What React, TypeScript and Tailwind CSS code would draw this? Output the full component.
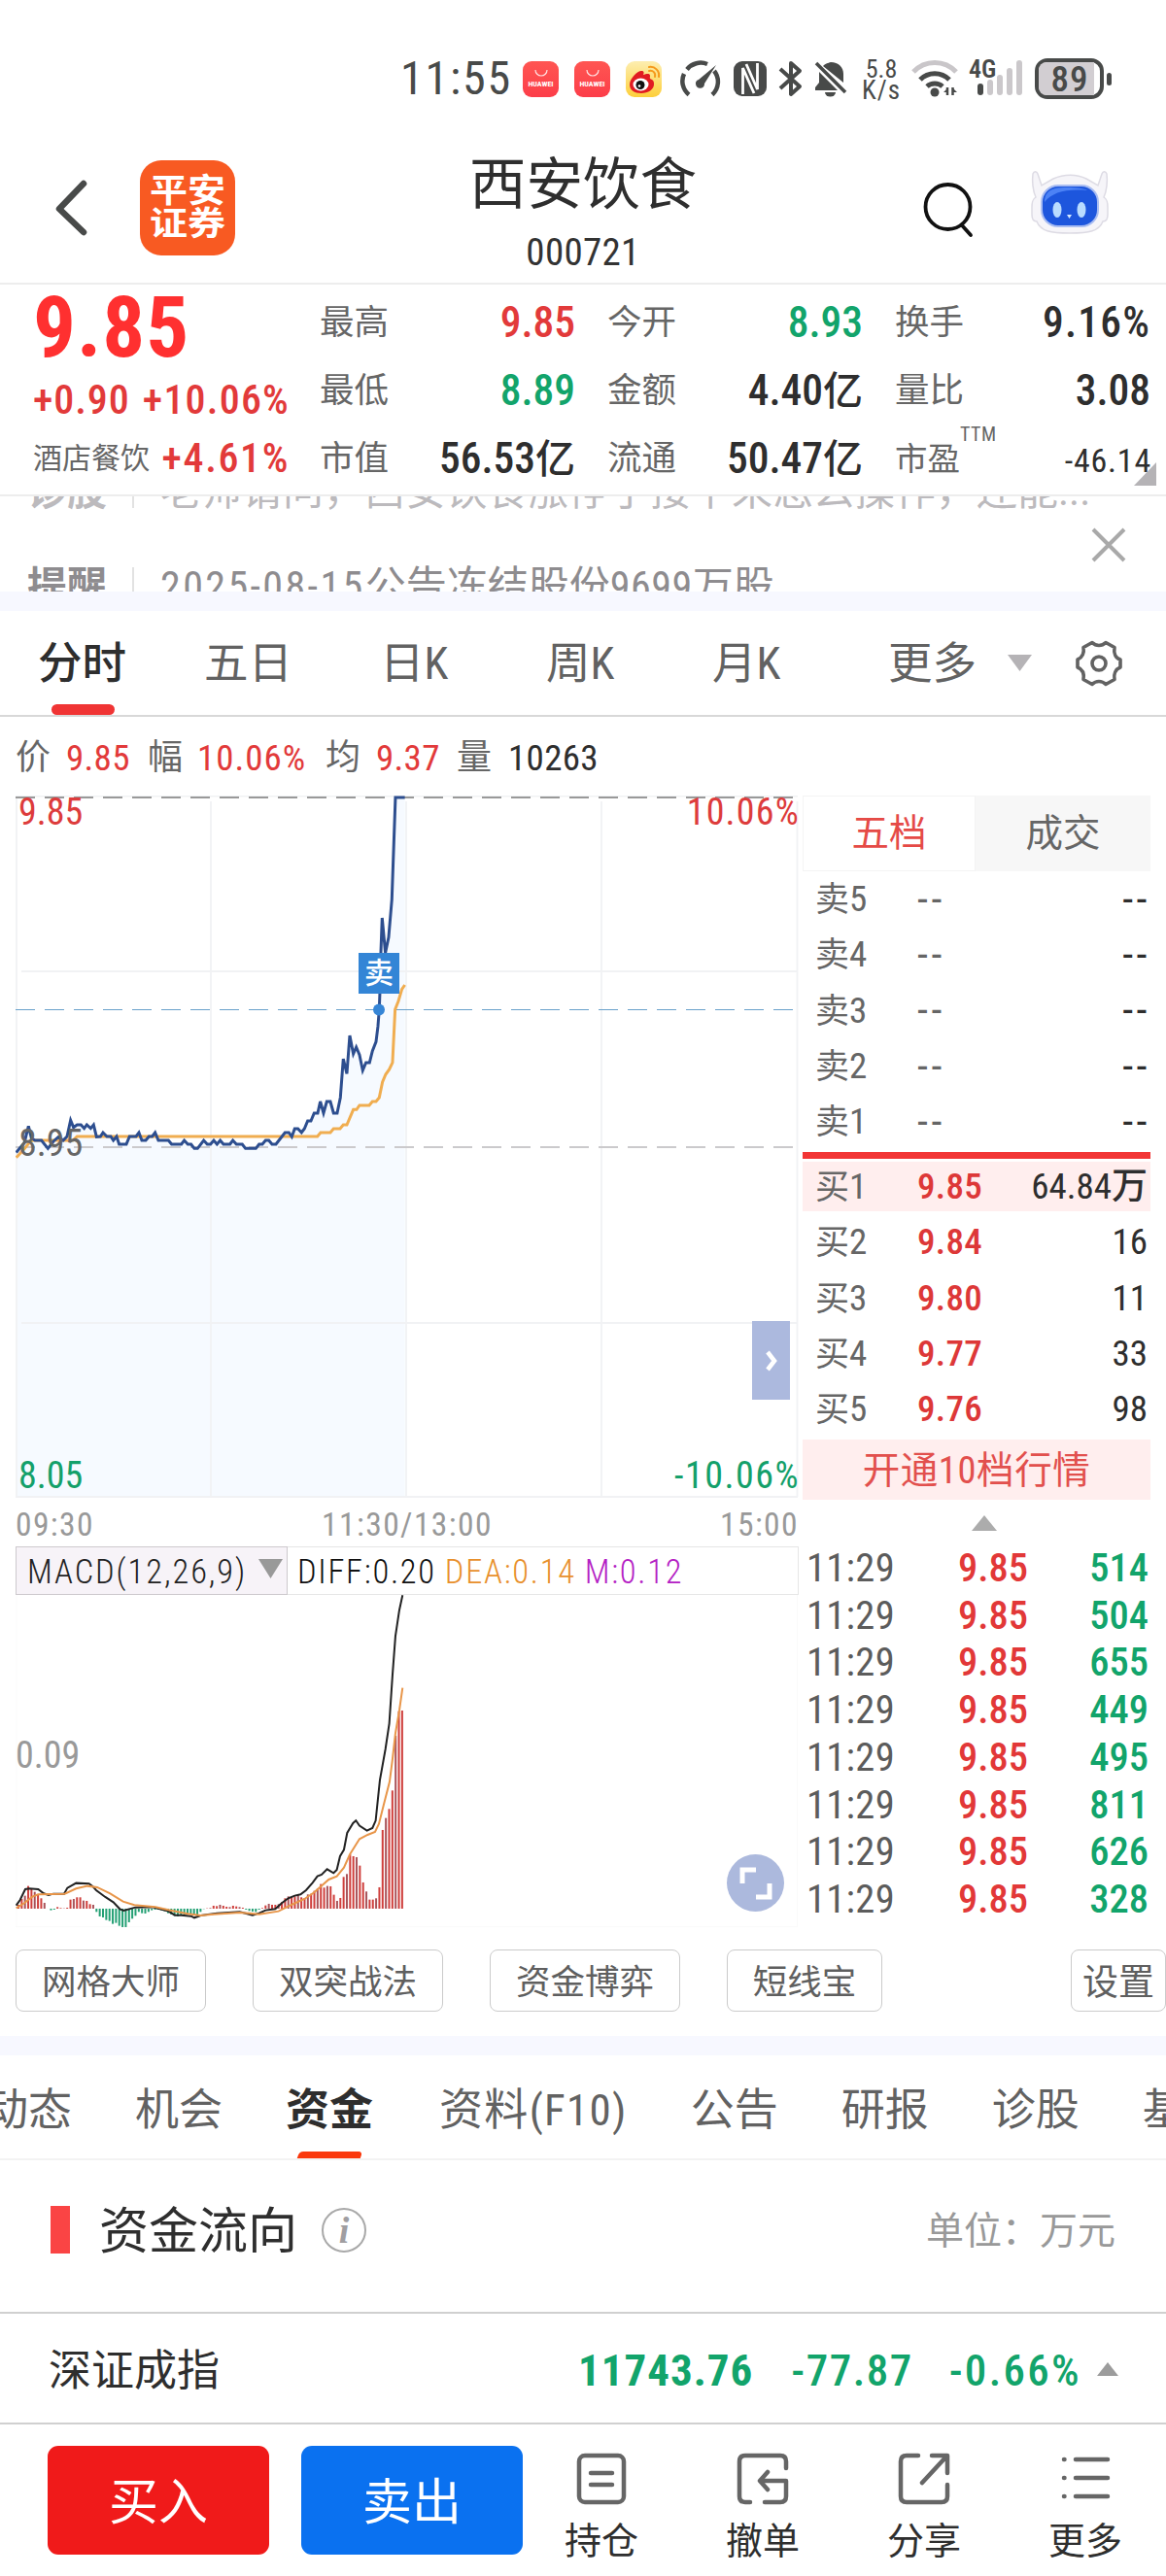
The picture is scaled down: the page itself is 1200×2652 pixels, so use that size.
import React from 'react';
import clsx from 'clsx';

const PRICE_LINE =
    '50,560 62,545 75,530 88,478 97,515 108,522 128,522 148,547 165,525 180,512 195,522 207,510 218,460 227,482 238,474 250,474 260,485 268,474 280,485 289,474 298,511 310,510 318,498 330,510 342,510 350,522 360,510 368,534 390,534 400,510 420,510 429,498 438,522 450,522 460,510 470,510 479,498 489,522 520,522 530,534 560,534 569,522 580,534 590,534 600,547 610,547 629,522 640,534 650,534 660,522 670,534 680,522 690,534 710,534 719,522 730,534 748,534 758,547 790,547 800,534 810,534 820,522 830,522 840,534 852,534 880,498 892,498 901,511 910,486 920,486 931,498 940,486 950,462 960,462 970,438 981,438 989,402 999,438 1009,402 1020,402 1030,438 1041,438 1051,390 1060,270 1071,316 1080,198 1091,255 1100,234 1110,258 1120,306 1130,282 1141,282 1150,246 1161,218 1167,170 1171,118 1173,66 1176,-57 1180,-165 1190,-57 1200,-105 1210,-222 1221,-537 1250,-537';

const AVG_LINE =
    '50,575 55,570 75,548 90,530 100,522 225,522 238,510 980,510 990,498 1020,498 1030,486 1050,486 1060,474 1071,474 1091,427 1101,427 1110,414 1140,414 1150,402 1161,402 1171,390 1181,342 1191,318 1202,303 1212,282 1220,118 1230,92 1241,55 1250,42';

const DIFF_LINE =
    '50,1022 62,1005 78,972 90,970 118,972 135,985 150,990 165,986 198,986 208,968 235,953 275,955 285,962 297,975 325,996 350,1012 370,1033 382,1038 418,1028 470,1027 520,1040 540,1052 560,1052 590,1055 600,1060 620,1053 670,1046 740,1042 780,1052 800,1046 820,1037 850,1033 870,1015 890,1000 910,992 928,988 945,975 965,952 980,932 993,927 1010,910 1030,922 1040,912 1050,870 1062,850 1072,798 1090,768 1099,760 1110,776 1133,791 1150,783 1160,760 1173,635 1190,540 1202,460 1212,310 1221,190 1233,110 1243,64';

const DEA_LINE =
    '50,1030 75,1015 100,995 118,988 200,986 235,970 270,962 300,966 340,985 380,1010 415,1021 480,1027 530,1038 580,1048 620,1053 660,1049 740,1044 800,1049 860,1040 900,1020 940,1002 970,982 1015,942 1040,932 1062,905 1080,865 1110,817 1135,804 1158,795 1170,770 1185,710 1203,640 1212,570 1221,490 1233,420 1243,350';

const MACD_BARS = [
    12, 30, 40, 70, 60, 52, 42, 32, 18, 0, -5, -3, 5, 2, 1, 3, 28, 30, 35, 35, 25, 24, 14, 12, -10, -24, -27, -35, -38, -47,
    -44, -53, -57, -57, -42, -31, -22, -10, -14, -15, -10, -5, -3, -3, -5, -8, -14, -18, -22, -24, -20, -18, -16, -16, -19,
    -20, -10, -1, 1, 2, 9, 8, 12, 9, 6, 5, 9, 7, 5, 3, -3, -7, -9, -10, -3, 2, 10, 15, 12, 12, 14, 20, 32, 38, 36, 38, 42,
    35, 32, 44, 46, 55, 62, 76, 65, 70, 69, 43, 24, 33, 98, 107, 168, 162, 159, 133, 81, 53, 28, 28, 32, 66, 243, 280, 308,
    365, 534, 610, 612,
];

const asks = ['卖5', '卖4', '卖3', '卖2', '卖1'];

const bids = [
    { label: '买1', price: '9.85', qty: '64.84万' },
    { label: '买2', price: '9.84', qty: '16' },
    { label: '买3', price: '9.80', qty: '11' },
    { label: '买4', price: '9.77', qty: '33' },
    { label: '买5', price: '9.76', qty: '98' },
];

const ticks = ['514', '504', '655', '449', '495', '811', '626', '328'];

const HuaweiIcon = () => (
    <div className="flex h-[37px] w-[37px] flex-col items-center justify-center rounded-[9px] bg-gradient-to-b from-[#ff5552] to-[#fc3d49]">
        <svg width="14" height="9" viewBox="0 0 14 9" fill="none" stroke="#ffe3e3" strokeWidth="1.2">
            <path d="M1 1a6 6 0 0 0 12 0" />
        </svg>
        <span className="mt-[2px] text-[8px] leading-[9px] font-bold text-white">HUAWEI</span>
    </div>
);

const StatusBar = () => (
    <div className="flex h-[140px] shrink-0 items-start pt-[60px] pl-[412px] text-[#484a49]">
        <div className="flex h-[42px] items-center">
            <span className="w-[126px] text-[48px] leading-none tracking-[1.800px]">11:55</span>
            <HuaweiIcon />
            <div className="ml-4">
                <HuaweiIcon />
            </div>
            <svg className="ml-4" width="37" height="37" viewBox="0 0 37 37">
                <defs>
                    <linearGradient id="wb" x1="0" y1="0" x2="0" y2="1">
                        <stop offset="0" stopColor="#fdeeb0" />
                        <stop offset="1" stopColor="#fdcf3a" />
                    </linearGradient>
                </defs>
                <rect width="37" height="37" rx="9" fill="url(#wb)" />
                <path d="M4 24c0-6 8-14 12-14 3 0 3 2 2 4 3-1 7-2 7 1 0 2-1 3 2 4 2 1 2 3 2 5 0 5-6 9-13 9S4 30 4 24z" fill="#e11b22" />
                <ellipse cx="15.500" cy="24" rx="8" ry="6.500" fill="#fff" />
                <circle cx="15" cy="24.500" r="4.500" fill="#111" />
                <circle cx="14" cy="25.500" r="1.300" fill="#fff" />
                <path d="M24 10c4-1 7 2 6 6M24 6c6-1 11 4 10 10" fill="none" stroke="#f59a1b" strokeWidth="2" strokeLinecap="round" />
            </svg>
            <svg className="ml-[18px]" width="44" height="38" viewBox="0 0 44 38" fill="none" stroke="currentColor" strokeWidth="4.500">
                <path d="M10 35.500A18 18 0 0 1 5 14M8 9.500A18 18 0 0 1 29 4M36 11a18 18 0 0 1-2 24.500" />
                <path d="M38 5 26 24a4.500 4.500 0 1 1-6-4z" fill="currentColor" stroke="none" />
            </svg>
            <svg className="ml-[12px]" width="35" height="36" viewBox="0 0 35 36">
                <rect width="34" height="36" rx="9" fill="currentColor" />
                <path d="M9.500 34V7L21 33M24.500 2v27L13 3" fill="none" stroke="#fff" strokeWidth="2.800" />
            </svg>
            <svg className="ml-[11px]" width="26" height="38" viewBox="0 0 26 38" fill="none" stroke="currentColor" strokeWidth="4" strokeLinejoin="round">
                <path d="m2 9 20 18-9 8V3l9 8L2 29" />
            </svg>
            <svg className="ml-[11px]" width="34" height="38" viewBox="0 0 34 38" fill="currentColor">
                <path d="M5 12 24 31H1v-3l4-5zM9 6c3-3 5-3 8-4 8 0 13 5 13 12v9z" />
                <path d="m2 3 30 30" stroke="currentColor" strokeWidth="3.500" />
                <path d="M11 33h11a5.500 4.500 0 0 1-11 0z" />
            </svg>
        </div>
        <div className="ml-[15px] flex w-[40px] flex-col items-center text-[26px] leading-[22px] font-[450]">
            <span>5.8</span>
            <span className="text-[27px] tracking-[1px]">K/s</span>
        </div>
        <svg className="ml-[11px]" width="48" height="42" viewBox="0 0 48 42" fill="none" strokeWidth="5">
            <path d="M2 14a30 30 0 0 1 44 0" stroke="#c9c6c9" />
            <path d="M9 22a21 21 0 0 1 30 0M16 29a12 12 0 0 1 16 0" stroke="currentColor" />
            <circle cx="24" cy="35" r="4.500" fill="currentColor" />
            <path d="m38 30-5 5h5zm4 0 5 5h-5z" fill="currentColor" />
            <path d="M37 30v8M42.500 30v8" stroke="currentColor" strokeWidth="2.500" />
        </svg>
        <div className="relative ml-[11px] h-[42px] w-[58px]">
            <svg width="58" height="42" viewBox="0 0 58 42" fill="none" strokeWidth="6" strokeLinecap="round">
                <path d="M12 29v6" stroke="#484a49" />
                <path d="M22 25v10M32 20v15M42 13v22M52 5v30" stroke="#cbc8cb" />
            </svg>
            <span className="absolute top-0 left-0 text-[26px] leading-[22px] font-semibold">4G</span>
        </div>
        <div className="ml-[10px] flex items-center gap-[3px]">
            <div className="flex h-[42px] w-[71px] items-center rounded-[13px] border-4 border-[#484a49]">
                <div className="flex h-full w-[57px] items-center justify-center rounded-l-[8px] bg-[#d2ced2] pl-[7px] text-[37px] leading-none font-medium tracking-[1px]">89</div>
            </div>
            <div className="h-[13px] w-[5px] rounded-full bg-[#484a49]" />
        </div>
    </div>
);

const Header = () => (
    <div className="relative flex h-[153px] shrink-0 items-start justify-between border-b-2 border-[#ededed]">
        <div className="flex items-center pt-[25px] pl-[56px]">
            <svg width="36" height="60" viewBox="0 0 36 60" fill="none" stroke="#484a49" strokeWidth="6.500" strokeLinecap="round" strokeLinejoin="round">
                <path d="M30 5 5 31l25 24" />
            </svg>
            <div className="ml-[52px] flex h-[98px] w-[98px] flex-col items-center justify-center rounded-[22px] bg-[#f85a22] text-[39px] leading-[34px] font-bold text-white">
                <span className="scale-y-[0.86]">平安</span>
                <span className="scale-y-[0.86]">证券</span>
            </div>
        </div>
        <div className="absolute inset-x-0 top-[14px] flex flex-col items-center text-[#2e2e2e]">
            <span className="text-[58.500px] leading-[72px]">西安饮食</span>
            <span className="mt-[13px] text-[39px] leading-[42px] tracking-[0.300px] text-[#333]">000721</span>
        </div>
        <div className="flex items-start pt-[34px] pr-[58px]">
            <svg className="mt-[13px]" width="54" height="58" viewBox="0 0 54 58" fill="none" stroke="#111" strokeWidth="3.800" strokeLinecap="round">
                <circle cx="26.500" cy="26" r="23" />
                <path d="m41 45 9 10" />
            </svg>
            <svg className="ml-[57px]" width="82" height="68" viewBox="0 0 82 68">
                <path d="M3 5c1-3 4-3 5 0l4 12 12-7c11-5 24-5 34 0l12 7 4-12c1-3 4-3 5 0 1 7 0 18-3 24 3 2 4 4 4 10v8c0 5-2 7-5 7-4 10-14 12-34 12S11 64 7 54c-3 0-5-2-5-7v-8c0-6 1-8 4-10C3 23 2 12 3 5z" fill="#f6f5f9" stroke="#dddbe4" strokeWidth="1.500" />
                <rect x="12" y="17" width="58" height="42" rx="17" fill="#1d56dd" stroke="#a9bdf2" strokeWidth="2" />
                <path d="M26 20c-8 2-11 7-11 14 8-10 22-14 44-12-4-3-24-4-33-2z" fill="#4c82f5" />
                <ellipse cx="28" cy="42" rx="4.500" ry="8" fill="#b9dcff" />
                <ellipse cx="53" cy="42" rx="4.500" ry="8" fill="#b9dcff" />
                <path d="M38 47h5l-2.500 4z" fill="#d8ebff" />
            </svg>
        </div>
    </div>
);

interface StatProps {
    label: string;
    value: string;
    unit?: string;
    tone?: string;
}

const Stat: React.FC<StatProps> = ({ label, value, unit, tone = 'text-[#2e2e2e]' }) => (
    <div className="flex h-[70px] items-center justify-between">
        <span className="text-[35.500px] text-[#666]">{label}</span>
        <span className={clsx('text-[43.500px] font-medium', value.endsWith('%') && 'tracking-[1.200px]', tone)}>
            {value}
            {unit && <span className="text-[41px]">{unit}</span>}
        </span>
    </div>
);

const Quote = () => (
    <div className="relative flex h-[218px] shrink-0 border-b-2 border-[#ededed] pt-[5px] pl-[34px] leading-none">
        <div className="w-[295px] text-[#e23a3a]">
            <div className="flex h-[78px] items-center text-[87px] font-bold tracking-[1px] text-[#ff3030]">9.85</div>
            <div className="mt-[3px] flex h-[66px] w-[263px] items-center justify-between text-[42px] font-medium">
                <span className="tracking-[0.900px]">+0.90</span>
                <span className="-mr-px tracking-[1.200px]">+10.06%</span>
            </div>
            <div className="flex h-[54px] w-[263px] items-center justify-between text-[42px] font-medium">
                <span className="text-[30px] font-normal text-[#666]">酒店餐饮</span>
                <span className="-mr-px tracking-[1.600px]">+4.61%</span>
            </div>
        </div>
        <div className="w-[263px]">
            <Stat label="最高" value="9.85" tone="text-[#e23a3a]" />
            <Stat label="最低" value="8.89" tone="text-[#12a46b]" />
            <Stat label="市值" value="56.53" unit="亿" />
        </div>
        <div className="ml-[33px] w-[263px]">
            <Stat label="今开" value="8.93" tone="text-[#12a46b]" />
            <Stat label="金额" value="4.40" unit="亿" />
            <Stat label="流通" value="50.47" unit="亿" />
        </div>
        <div className="ml-[33px] w-[263px]">
            <Stat label="换手" value="9.16%" />
            <Stat label="量比" value="3.08" />
            <div className="flex h-[70px] items-center">
                <span className="text-[33.500px] text-[#666]">市盈</span>
                <span className="mb-[52px] text-[20px] tracking-[0.500px] text-[#666]">TTM</span>
                <span className="-mr-px ml-auto pt-[2px] text-[34px] font-[450] tracking-[0.800px] text-[#2e2e2e]">-46.14</span>
            </div>
        </div>
        <svg className="absolute right-[10px] bottom-[9px]" width="23" height="24" viewBox="0 0 23 24">
            <path d="M23 0v24H0z" fill="#b5b3b6" />
        </svg>
    </div>
);

const Notice = () => (
    <div className="relative h-[98px] shrink-0 overflow-hidden text-[42px] leading-[60px]">
        <div className="-mt-[35px] flex items-center text-[#bcbabd]">
            <span className="w-[136px] shrink-0 pl-[28px] text-[41px] font-bold">诊股</span>
            <div className="mr-[27px] h-[34px] w-[2px] shrink-0 bg-[#e2e2e2]" />
            <span>老师请问，西安饮食涨停了接下来怎么操作，还能...</span>
        </div>
        <div className="mt-[38px] flex items-center text-[#8e8c8f]">
            <span className="w-[136px] shrink-0 pl-[28px] text-[41px] font-bold">提醒</span>
            <div className="mr-[27px] h-[40px] w-[2px] shrink-0 bg-[#e2e2e2]" />
            <span className="tracking-[2.400px]">2025-08-15</span>
            <span>公告冻结股份</span>
            <span className="tracking-[0.500px]">9699</span>
            <span>万股</span>
        </div>
        <svg className="absolute top-[32px] right-[41px]" width="36" height="36" viewBox="0 0 36 36" stroke="#a9a9a9" strokeWidth="4">
            <path d="m2 2 32 32M34 2 2 34" />
        </svg>
    </div>
);

const ChartTabs = () => (
    <div className="flex h-[109px] shrink-0 items-center border-b-2 border-[#d8d8d8] pl-[39px] text-[45.500px] leading-none text-[#626262]">
        <div className="relative flex h-full w-[171px] items-center pt-[2px] font-medium text-[#2e2e2e]">
            分时
            <div className="absolute bottom-0 left-[14px] h-[11px] w-[65px] rounded-full bg-[#f03434]" />
        </div>
        <span className="w-[181px] pt-[2px]">五日</span>
        <span className="w-[171px] pt-[2px]">日K</span>
        <span className="w-[171px] pt-[2px]">周K</span>
        <span className="w-[181px] pt-[2px]">月K</span>
        <span className="w-[123px] pt-[2px]">更多</span>
        <svg width="25" height="17" viewBox="0 0 25 17">
            <path d="M0 0h25L12.500 17z" fill="#b5b3b6" />
        </svg>
        <svg className="ml-[45px]" width="48" height="48" viewBox="0 0 48 48" fill="none" stroke="#626262" strokeWidth="3.600" strokeLinejoin="round">
            <path d="M17 2.500c4 4 10 4 14 0l9 5c-1 6 1 11 6 12.500v8c-5 2-7 7-6 12.500l-9 5c-4-4-10-4-14 0l-9-5c1-6-1-10.500-6-12.500v-8c5-2 7-7 6-12.500z" />
            <circle cx="24" cy="24" r="7" />
        </svg>
    </div>
);

const PriceChart = () => (
    <div className="relative h-[723px] w-[806px] text-[38px] leading-[38px] font-[450]">
        <svg className="absolute inset-0" width="806" height="723" viewBox="16 819 806 723" fill="none">
            <polygon points={`${PRICE_LINE} 1250,1623 50,1623`} transform="translate(0 1000) scale(0.3333)" fill="#f6faff" />
            <path d="M17 819v722M217 825v716M418 825v716M619 825v716M820.500 825v716M16 819.500h805M22 1000h799M22 1362h799M16 1541h805" stroke="#f1f2f4" strokeWidth="1.800" />
            <path d="M16 821h801" stroke="#999" strokeWidth="2" strokeDasharray="20 10" />
            <path d="M16 1039.500h801" stroke="#69a1cb" strokeWidth="1.200" strokeDasharray="20 10" />
            <path d="M16 1181h801" stroke="#cbcacc" strokeWidth="2" strokeDasharray="20 10" />
            <g transform="translate(0 1000) scale(0.3333)" strokeWidth="9">
                <polyline points={AVG_LINE} stroke="#f0ad50" />
                <polyline points={PRICE_LINE} stroke="#2d4e8f" />
            </g>
            <circle cx="390" cy="1039.500" r="6" fill="#3585d6" />
        </svg>
        <span className="absolute top-[-2px] left-[3px] text-[#dd3c3c]">9.85</span>
        <span className="absolute top-[-2px] -right-px tracking-[1.200px] text-[#dd3c3c]">10.06%</span>
        <span className="absolute top-[339px] left-[3px] font-normal text-[#666]">8.95</span>
        <span className="absolute bottom-[4px] left-[3px] text-[#14a06a]">8.05</span>
        <span className="absolute -right-px bottom-[4px] tracking-[1.500px] text-[#14a06a]">-10.06%</span>
        <div className="absolute top-[162px] left-[353px] flex h-[42px] w-[42px] items-center justify-center bg-[#3385d6] text-[30px] font-medium text-white">卖</div>
        <div className="absolute top-[541px] left-[758px] flex h-[81px] w-[39px] items-center justify-center bg-[#acb9de]">
            <svg width="14" height="22" viewBox="0 0 14 22" fill="none" stroke="#fff" strokeWidth="4.500">
                <path d="m3 2 7 9-7 9" />
            </svg>
        </div>
    </div>
);

const MacdChart = () => (
    <div className="relative h-[342px] w-[806px]">
        <svg width="806" height="342" viewBox="16 1641 806 342" fill="none">
            <path d="M17 1641v341M16 1982.500h805M820.500 1641v341" stroke="#fafafa" />
            <g transform="translate(0 1620) scale(0.3333)">
                {MACD_BARS.map((v, i) => (
                    <rect
                        key={i}
                        x={54 + i * 10.04}
                        y={v > 0 ? 1032 - v : 1032}
                        width="6"
                        height={Math.abs(v)}
                        fill={v < 0 ? '#24a074' : i % 3 === 2 ? '#a9545a' : '#cf3f3c'}
                    />
                ))}
                <polyline points={DIFF_LINE} stroke="#222" strokeWidth="6" />
                <polyline points={DEA_LINE} stroke="#e8964a" strokeWidth="6" />
            </g>
        </svg>
        <span className="absolute top-[146px] left-0 text-[38px] leading-[38px] text-[#999]">0.09</span>
        <div className="absolute top-[267px] left-[732px] flex h-[59px] w-[59px] items-center justify-center rounded-full bg-[#acb9dd]">
            <svg width="34" height="34" viewBox="0 0 34 34" fill="none" stroke="#fff" strokeWidth="5">
                <path d="M3 17V3h14M31 17v14H17" />
            </svg>
        </div>
    </div>
);

const OrderBook = () => (
    <div className="w-[358px] text-[37px] leading-none">
        <div className="flex h-[78px] text-[38.500px]">
            <div className="flex w-[178px] items-center justify-center border border-[#f4f4f4] text-[#e54a46]">五档</div>
            <div className="flex flex-1 items-center justify-center bg-[#f7f7f7] text-[#666]">成交</div>
        </div>
        <div className="h-[289px]">
            {asks.map((label) => (
                <div key={label} className="flex h-[57.300px] items-center pr-[3px] pl-[13px] text-[#666]">
                    <span className="w-[105px] text-[37px]">
                        <span className="text-[35px]">{label[0]}</span>
                        {label[1]}
                    </span>
                    <span className="text-[44px] tracking-[3.500px]">--</span>
                    <span className="ml-auto -mr-[3px] text-[44px] font-[450] tracking-[3.500px] text-[#2e2e2e]">--</span>
                </div>
            ))}
        </div>
        <div className="h-[7px] bg-[#f23535]" />
        <div className="h-[289px]">
            {bids.map(({ label, price, qty }, i) => (
                <div key={label} className="flex h-[57.300px] items-center">
                    <div className={clsx('flex h-[51px] w-full items-center pr-[3px] pl-[13px]', i === 0 && 'bg-[#ffeeee]')}>
                        <span className="w-[105px] text-[37px] text-[#666]">
                            <span className="text-[35px]">{label[0]}</span>
                            {label[1]}
                        </span>
                        <span className="font-medium tracking-[0.300px] text-[#dd3838]">{price}</span>
                        <span className="ml-auto font-[450] text-[#2e2e2e]">{qty}</span>
                    </div>
                </div>
            ))}
        </div>
        <div className="flex h-[62px] items-center justify-center bg-[#ffeeee] pt-[2px] text-[38.500px] tracking-[0.600px] text-[#e2504d]">开通10档行情</div>
        <svg className="mt-[16px] ml-[174px]" width="26" height="16" viewBox="0 0 26 16">
            <path d="M13 0 26 16H0z" fill="#acacac" />
        </svg>
        <div className="mt-[14px] text-[40.500px]">
            {ticks.map((vol) => (
                <div key={vol} className="flex h-[48.700px] items-center pr-[2px] pl-[4px] font-medium">
                    <span className="w-[156px] font-normal tracking-[0.300px] text-[#5c5c5c]">11:29</span>
                    <span className="text-[#e23838]">9.85</span>
                    <span className="ml-auto text-[#12a46b]">{vol}</span>
                </div>
            ))}
        </div>
    </div>
);

const Chip: React.FC<{ children: React.ReactNode; className: string }> = ({ children, className }) => (
    <div className={clsx('flex h-[64px] shrink-0 items-center justify-center rounded-[8px] border-[1.500px] border-[#cbcbcb] pt-[5px]', className)}>{children}</div>
);

const ChartSection = () => (
    <>
        <div className="flex h-[81px] shrink-0 items-center pt-[3px] pl-[16px] text-[37px] leading-none text-[#666]">
            <span className="w-[52px] text-[36px]">价</span>
            <span className="w-[84px] font-[450] tracking-[0.300px] text-[#e23a3a]">9.85</span>
            <span className="w-[51px] text-[36px]">幅</span>
            <span className="w-[132px] font-[450] tracking-[1px] text-[#e23a3a]">10.06%</span>
            <span className="w-[52px] text-[36px]">均</span>
            <span className="w-[83px] font-[450] tracking-[0.300px] text-[#e23a3a]">9.37</span>
            <span className="w-[53px] text-[36px]">量</span>
            <span className="tracking-[0.300px] text-[#2e2e2e]">10263</span>
        </div>
        <div className="flex h-[1164px] shrink-0 justify-between pr-[16px] pl-[16px]">
            <div className="w-[806px]">
                <PriceChart />
                <div className="flex h-[50px] items-center justify-between pt-[5px] text-[33.500px] leading-none tracking-[1.400px] text-[#999]">
                    <span>09:30</span>
                    <span>11:30/13:00</span>
                    <span>15:00</span>
                </div>
                <div className="flex h-[50px] items-center border border-[#e6e6e6] text-[34.500px] leading-none font-light">
                    <div className="-ml-px flex h-[50px] w-[280px] items-center border border-[#cdc9cd] bg-[#f7f3f8] pl-[11px] text-[#222]">
                        <span className="w-[238px] pt-[3px] tracking-[1.900px]">MACD(12,26,9)</span>
                        <svg className="-mt-1" width="25" height="20" viewBox="0 0 25 20">
                            <path d="M0 0h25L12.500 20z" fill="#999" />
                        </svg>
                    </div>
                    <span className="ml-[10px] pt-[3px] tracking-[1.700px] text-[#111]">DIFF:0.20</span>
                    <span className="ml-[9px] pt-[3px] tracking-[1.700px] text-[#e8902c]">DEA:0.14</span>
                    <span className="ml-[9px] pt-[3px] tracking-[1.700px] text-[#b420c4]">M:0.12</span>
                </div>
                <MacdChart />
            </div>
            <OrderBook />
        </div>
        <div className="flex h-[113px] shrink-0 pt-[24px] pl-[16px] text-[35.500px] leading-none text-[#5f5f5f]">
            <Chip className="w-[196px]">网格大师</Chip>
            <Chip className="ml-[48px] w-[196px]">双突战法</Chip>
            <Chip className="ml-[48px] w-[196px]">资金博弈</Chip>
            <Chip className="ml-[48px] w-[160px]">短线宝</Chip>
            <Chip className="ml-auto w-[98px] text-[37px]">设置</Chip>
        </div>
    </>
);

const InfoTabs = () => (
    <div className="flex h-[108px] shrink-0 items-center gap-[65px] overflow-hidden border-b-2 border-[#f3f3f3] text-[45px] leading-none whitespace-nowrap text-[#626262]">
        <span className="-ml-[16px] pt-[6px]">动态</span>
        <span className="pt-[6px]">机会</span>
        <div className="relative flex h-full items-center pt-[6px] font-bold text-[#2e2e2e]">
            资金
            <div className="absolute bottom-0 left-[13px] h-[7px] w-[65px] -skew-x-[20deg] rounded-t-[4px] bg-[#fa380c]" />
        </div>
        <span className="ml-[3px] w-[197px] pt-[6px] tracking-[1.300px]">资料(F10)</span>
        <span className="pt-[6px]">公告</span>
        <span className="pt-[6px]">研报</span>
        <span className="pt-[6px]">诊股</span>
        <span className="pt-[6px]">基本面</span>
    </div>
);

const FundFlow = () => (
    <div className="flex h-[156px] shrink-0 items-center pr-[52px] pb-[13px] pl-[52px] leading-none">
        <div className="h-[49px] w-[20px] bg-[#fa4444]" />
        <span className="ml-[30px] pt-[4px] text-[51px] text-[#2e2e2e]">资金流向</span>
        <div className="ml-[25px] flex h-[46px] w-[46px] items-center justify-center rounded-full border-2 border-[#a9a9a9] font-['Liberation_Serif',serif] text-[38px] font-bold text-[#a09ea1] italic">i</div>
        <span className="ml-auto pt-[3px] text-[39px] text-[#999]">单位：万元</span>
    </div>
);

const IndexBar = () => (
    <div className="flex h-[116px] shrink-0 items-center border-y-2 border-[#d0d0d0] pt-[5px] pr-[49px] pl-[50px] text-[45px] leading-none font-medium text-[#12a46b]">
        <span className="text-[44px] font-normal text-[#2e2e2e]">深证成指</span>
        <span className="ml-auto font-bold tracking-[1px]">11743.76</span>
        <span className="ml-[39px] tracking-[1.500px]">-77.87</span>
        <span className="ml-[37px] tracking-[2.300px]">-0.66%</span>
        <svg className="-mt-[4px] ml-[16px]" width="22" height="14" viewBox="0 0 22 14">
            <path d="M11 0 22 14H0z" fill="#9c9c9c" />
        </svg>
    </div>
);

const NavItem: React.FC<{ label: string; children: React.ReactNode }> = ({ label, children }) => (
    <div className="flex w-[76px] flex-col items-center">
        <svg width="56" height="56" viewBox="0 0 56 56" fill="none" stroke="#666" strokeWidth="4.500" strokeLinecap="round" strokeLinejoin="round">
            {children}
        </svg>
        <span className="mt-[17px] text-[38px] leading-[38px] text-[#2e2e2e]">{label}</span>
    </div>
);

const BottomBar = () => (
    <div className="flex flex-1 items-start pr-[45px] pl-[49px]">
        <div className="mt-[22px] flex h-[112px] w-[228px] items-center justify-center rounded-[11px] bg-[#f01a1a] pt-[4px] text-[51px] leading-none text-white">买入</div>
        <div className="mt-[22px] ml-[33px] flex h-[112px] w-[228px] items-center justify-center rounded-[11px] bg-[#0a71f0] pt-[4px] text-[51px] leading-none text-white">卖出</div>
        <div className="mt-[28px] ml-[43px] flex flex-1 justify-between">
            <NavItem label="持仓">
                <rect x="5" y="4" width="46" height="48" rx="6" />
                <path d="M17 22h22M17 34h22" />
            </NavItem>
            <NavItem label="撤单">
                <path d="M52 17V10q0-6-6-6H10q-6 0-6 6v36q0 6 6 6h5M52 30v16q0 6-6 6H30M52 30H27M33 21l-8 9 8 9" />
            </NavItem>
            <NavItem label="分享">
                <path d="M22 4H10q-6 0-6 6v36q0 6 6 6h36q6 0 6-6V34M36 4h16v18M51 5 26 32" />
            </NavItem>
            <NavItem label="更多">
                <path d="M18 8h33M18 27h33M18 46h33M6 8h.5M6 27h.5M6 46h.5" />
            </NavItem>
        </div>
    </div>
);

export default function App() {
    return (
        <div className="flex h-[2652px] w-[1200px] flex-col overflow-hidden bg-white font-['Roboto_Condensed','Noto_Sans_CJK_SC',sans-serif] whitespace-nowrap">
            <StatusBar />
            <Header />
            <Quote />
            <Notice />
            <div className="h-[20px] shrink-0 bg-[#f7f8ff]" />
            <ChartTabs />
            <ChartSection />
            <div className="h-[20px] shrink-0 bg-[#f7f8ff]" />
            <InfoTabs />
            <FundFlow />
            <IndexBar />
            <BottomBar />
        </div>
    );
}
